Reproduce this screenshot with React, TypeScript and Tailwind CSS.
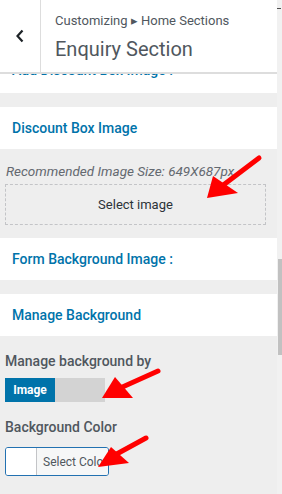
import React from "react";

function SectionTitle({ label }: { label: string }) {
	return (
		<div className="h-[42px] bg-white flex items-center pl-[12px] text-[14px] font-medium text-[#0073aa]">
			{label}
		</div>
	);
}

function Arrows() {
	// red annotation arrows drawn over the screenshot
	const arrows = [
		{ x1: 259, y1: 158, x2: 222, y2: 186, tip: "207,198 213,176 238,193" },
		{ x1: 158, y1: 371, x2: 118, y2: 389, tip: "102,398 115,377 133,398" },
		{ x1: 146, y1: 438, x2: 113, y2: 456, tip: "98,467 111,447 129,463" },
	];
	return (
		<svg
			className="absolute inset-0 pointer-events-none"
			width={282}
			height={494}
			viewBox="0 0 282 494"
		>
			{arrows.map((a, i) => (
				<g key={i}>
					<line
						x1={a.x1}
						y1={a.y1}
						x2={a.x2}
						y2={a.y2}
						stroke="#ff0000"
						strokeWidth={5}
						strokeLinecap="round"
					/>
					<polygon points={a.tip} fill="#ff0000" />
				</g>
			))}
		</svg>
	);
}

export default function App() {
	return (
		<div
			className="relative w-[282px] h-[494px] overflow-hidden flex bg-[#eeeeee]"
			style={{ fontFamily: "Roboto, 'Noto Sans', sans-serif" }}
		>
			<div className="w-[277px] flex flex-col">
				<div className="h-[74px] bg-white flex border-b-2 border-[#dddddd] shrink-0">
					<div className="w-[41px] border-r border-[#dddddd] flex items-center justify-center">
						<svg width="10" height="14" viewBox="0 0 10 14">
							<path d="M7.5 1.5 L2.5 7 L7.5 12.5" fill="none" stroke="#1d2327" strokeWidth="2.2" />
						</svg>
					</div>
					<div className="pl-[14px] pt-[13px]">
						<div className="text-[13px] leading-[16px] text-[#50575e]">
							Customizing ▸ Home Sections
						</div>
						<div className="mt-[8px] text-[20px] leading-[24px] text-[#50575e]">
							Enquiry Section
						</div>
					</div>
				</div>
				{/* section scrolled up under the sticky header */}
				<div className="h-[19px] bg-white overflow-hidden shrink-0">
					<div className="-mt-[13px] pl-[12px] text-[14px] leading-[18px] font-medium text-[#0073aa]">
						Add Discount Box Image :
					</div>
				</div>
				<div className="h-[14px]" />
				<SectionTitle label="Discount Box Image" />
				<div className="px-[5px] pt-[14px] pb-[13px]">
					<div className="pl-[1px] text-[13.5px] leading-[16px] italic text-[#646970]">
						Recommended Image Size: 649X687px
					</div>
					<div className="mt-[5px] w-[261px] h-[41px] border border-dashed border-[#c3c4c7] flex items-center justify-center text-[13px] text-[#2c3338]">
						Select image
					</div>
				</div>
				<SectionTitle label="Form Background Image :" />
				<div className="h-[14px]" />
				<SectionTitle label="Manage Background" />
				<div className="px-[5px] pt-[16px]">
					<div className="text-[14px] leading-[18px] font-medium text-[#50575e]">
						Manage background by
					</div>
					<div className="mt-[8px] flex h-[24px] w-[100px]">
						<div className="w-[50px] bg-[#0073aa] text-white text-[12px] font-bold flex items-center justify-center">
							Image
						</div>
						<div className="w-[50px] bg-[#d3d3d3]" />
					</div>
					<div className="mt-[16px] text-[14px] leading-[18px] font-medium text-[#50575e]">
						Background Color
					</div>
					<div className="mt-[11px] w-[104px] h-[29px] flex border border-[#2271b1] rounded-[3px] overflow-hidden">
						<div className="w-[31px] bg-white border-r border-[#c3c4c7]" />
						<div className="flex-1 bg-[#f6f7f7] flex items-center pl-[6px] text-[12px] text-[#50575e]">
							Select Color
						</div>
					</div>
				</div>
			</div>
			<div className="w-[5px] bg-[#f1f1f1] flex flex-col">
				<div className="mt-[8px] h-[1px] w-[4px] bg-[#505050]" />
				<div className="mt-[250px] h-[96px] w-[4px] ml-[1px] bg-[#c1c1c1]" />
			</div>
			<Arrows />
		</div>
	);
}
